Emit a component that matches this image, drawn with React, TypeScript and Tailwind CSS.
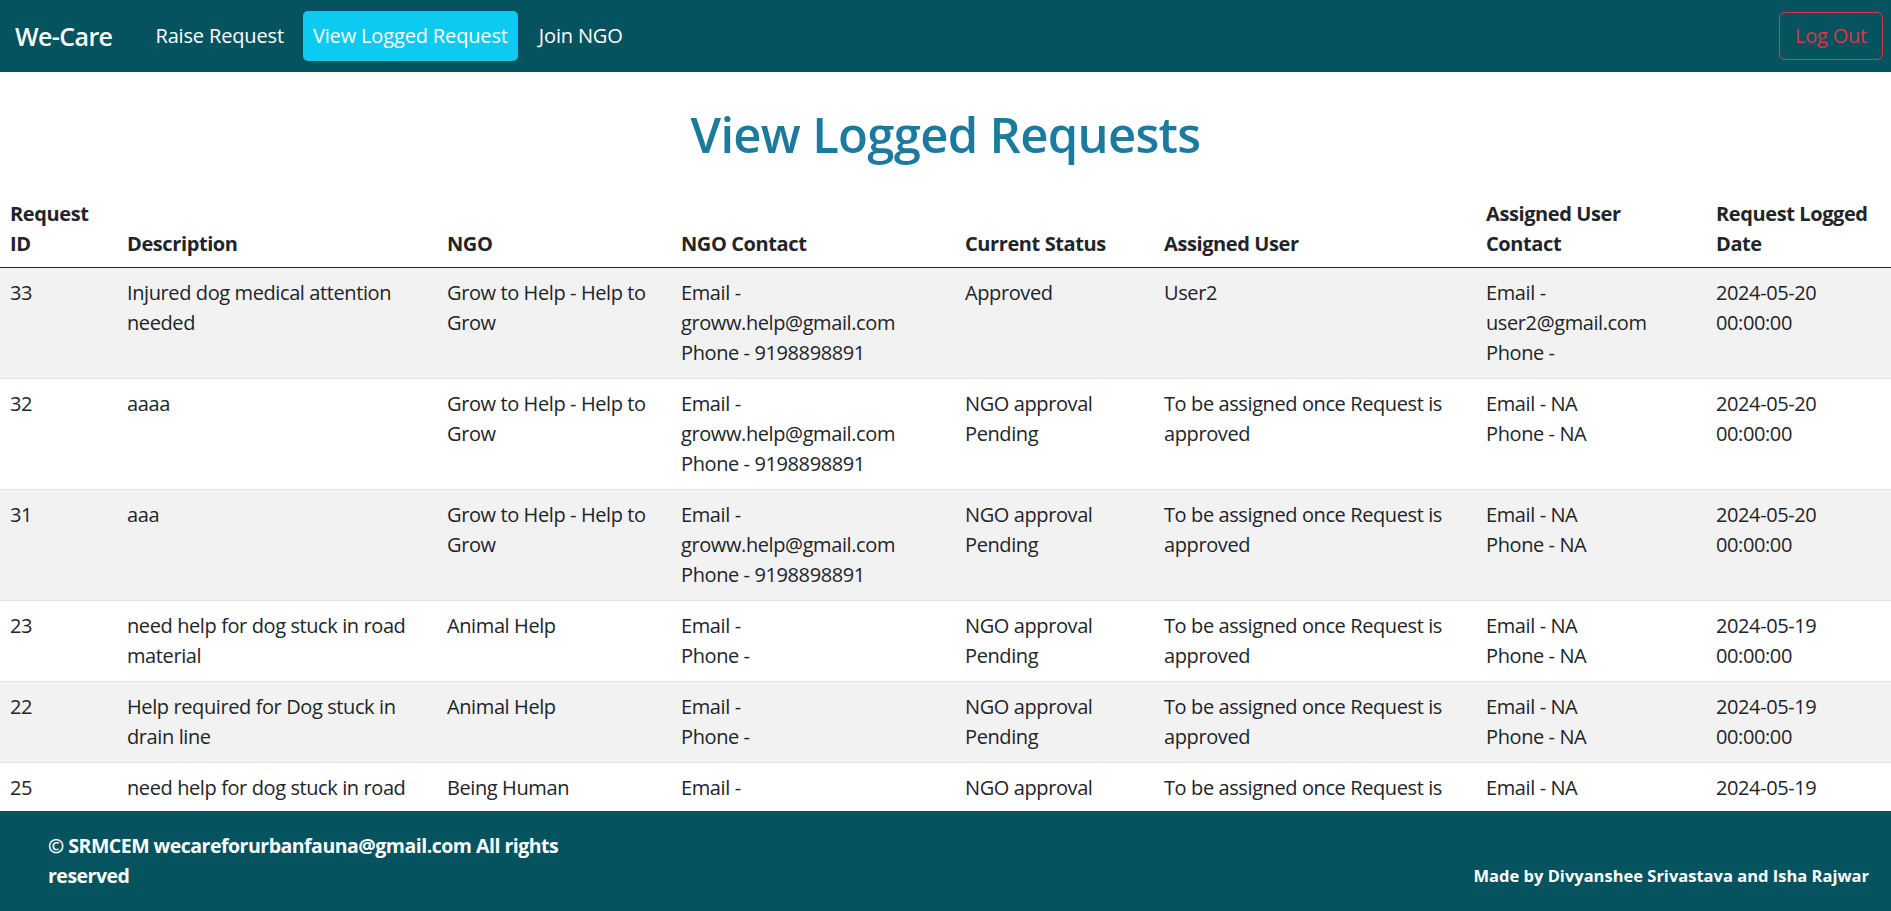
import React from 'react';

type Row = {
  id: string;
  desc: string[];
  ngo: string[];
  contact: string[];
  status: string[];
  user: string[];
  userContact: string[];
  date: string[];
};

const groww = ['Email -', 'groww.help@gmail.com', 'Phone - 9198898891'];
const pending = ['NGO approval', 'Pending'];
const toAssign = ['To be assigned once Request is', 'approved'];
const na = ['Email - NA', 'Phone - NA'];

const rows: Row[] = [
  {
    id: '33',
    desc: ['Injured dog medical attention', 'needed'],
    ngo: ['Grow to Help - Help to', 'Grow'],
    contact: groww,
    status: ['Approved'],
    user: ['User2'],
    userContact: ['Email -', 'user2@gmail.com', 'Phone -'],
    date: ['2024-05-20', '00:00:00'],
  },
  {
    id: '32',
    desc: ['aaaa'],
    ngo: ['Grow to Help - Help to', 'Grow'],
    contact: groww,
    status: pending,
    user: toAssign,
    userContact: na,
    date: ['2024-05-20', '00:00:00'],
  },
  {
    id: '31',
    desc: ['aaa'],
    ngo: ['Grow to Help - Help to', 'Grow'],
    contact: groww,
    status: pending,
    user: toAssign,
    userContact: na,
    date: ['2024-05-20', '00:00:00'],
  },
  {
    id: '23',
    desc: ['need help for dog stuck in road', 'material'],
    ngo: ['Animal Help'],
    contact: ['Email -', 'Phone -'],
    status: pending,
    user: toAssign,
    userContact: na,
    date: ['2024-05-19', '00:00:00'],
  },
  {
    id: '22',
    desc: ['Help required for Dog stuck in', 'drain line'],
    ngo: ['Animal Help'],
    contact: ['Email -', 'Phone -'],
    status: pending,
    user: toAssign,
    userContact: na,
    date: ['2024-05-19', '00:00:00'],
  },
  // last row sits under the footer, only its first line shows
  {
    id: '25',
    desc: ['need help for dog stuck in road'],
    ngo: ['Being Human'],
    contact: ['Email -'],
    status: ['NGO approval'],
    user: ['To be assigned once Request is'],
    userContact: ['Email - NA'],
    date: ['2024-05-19'],
  },
];

const Lines = ({ lines }: { lines: string[] }) => (
  <>
    {lines.map((l, i) => (
      <div key={i} className="whitespace-nowrap">{l}</div>
    ))}
  </>
);

const headers: string[][] = [
  ['Request', 'ID'],
  ['Description'],
  ['NGO'],
  ['NGO Contact'],
  ['Current Status'],
  ['Assigned User'],
  ['Assigned User', 'Contact'],
  ['Request Logged', 'Date'],
];

const App = () => {
  return (
    <div
      className="h-screen flex flex-col bg-white text-[#212529] text-[20px] leading-[30px] tracking-[-0.4px]"
      style={{ fontFamily: '"Open Sans", "Noto Sans", sans-serif' }}
    >
      {/* navbar */}
      <nav className="h-[72px] shrink-0 bg-[#04535f] flex items-center pl-[15px] pr-[8px]">
        <span className="text-white text-[25px] font-semibold mr-[33px] tracking-[-0.6px]">We-Care</span>
        <div className="flex items-center tracking-[-0.15px]">
          <a className="px-[10px] py-[10px] text-white">Raise Request</a>
          <a className="px-[10px] py-[10px] text-white bg-[#0dcaf0] rounded-[5px] ml-[9px]">View Logged Request</a>
          <a className="px-[10px] py-[10px] text-white ml-[11px]">Join NGO</a>
        </div>
        <button className="ml-auto h-[48px] px-[15px] border border-[#dc3545] text-[#dc3545] rounded-[6px] tracking-[-0.2px]">
          Log Out
        </button>
      </nav>

      <main className="flex-1 overflow-hidden">
        <h1 className="text-center text-[#1b7a9e] text-[49px] leading-[60px] font-semibold mt-[32px] mb-[25px] tracking-[-0.7px]">
          View Logged Requests
        </h1>
        <table className="w-full table-fixed border-collapse">
          <colgroup>
            <col className="w-[117px]" />
            <col className="w-[320px]" />
            <col className="w-[234px]" />
            <col className="w-[284px]" />
            <col className="w-[199px]" />
            <col className="w-[322px]" />
            <col className="w-[230px]" />
            <col />
          </colgroup>
          <thead>
            <tr className="border-b-[1.5px] border-[#212529]">
              {headers.map((h, i) => (
                <th key={i} className="text-left align-bottom font-bold px-[10px] pt-[10px] pb-[8px]">
                  <Lines lines={h} />
                </th>
              ))}
            </tr>
          </thead>
          <tbody>
            {rows.map((r, i) => (
              <tr
                key={r.id}
                className={`border-b border-[#dee2e6] ${i % 2 === 0 ? 'bg-[#f2f2f2]' : 'bg-white'}`}
              >
                <td className="align-top px-[10px] py-[10px]">{r.id}</td>
                <td className="align-top px-[10px] py-[10px]"><Lines lines={r.desc} /></td>
                <td className="align-top px-[10px] py-[10px]"><Lines lines={r.ngo} /></td>
                <td className="align-top px-[10px] py-[10px]"><Lines lines={r.contact} /></td>
                <td className="align-top px-[10px] py-[10px]"><Lines lines={r.status} /></td>
                <td className="align-top px-[10px] py-[10px]"><Lines lines={r.user} /></td>
                <td className="align-top px-[10px] py-[10px]"><Lines lines={r.userContact} /></td>
                <td className="align-top px-[10px] py-[10px]"><Lines lines={r.date} /></td>
              </tr>
            ))}
          </tbody>
        </table>
      </main>

      {/* footer */}
      <footer className="h-[100px] shrink-0 bg-[#04535f] text-white font-bold flex items-start justify-between pl-[48px] pr-[22px] pt-[20px]">
        <p className="w-[560px] text-[19.5px] tracking-[-0.5px]">© SRMCEM wecareforurbanfauna@gmail.com All rights reserved</p>
        <p className="text-[16.5px] tracking-normal mt-[30px]">Made by Divyanshee Srivastava and Isha Rajwar</p>
      </footer>
    </div>
  );
};

export default App;
